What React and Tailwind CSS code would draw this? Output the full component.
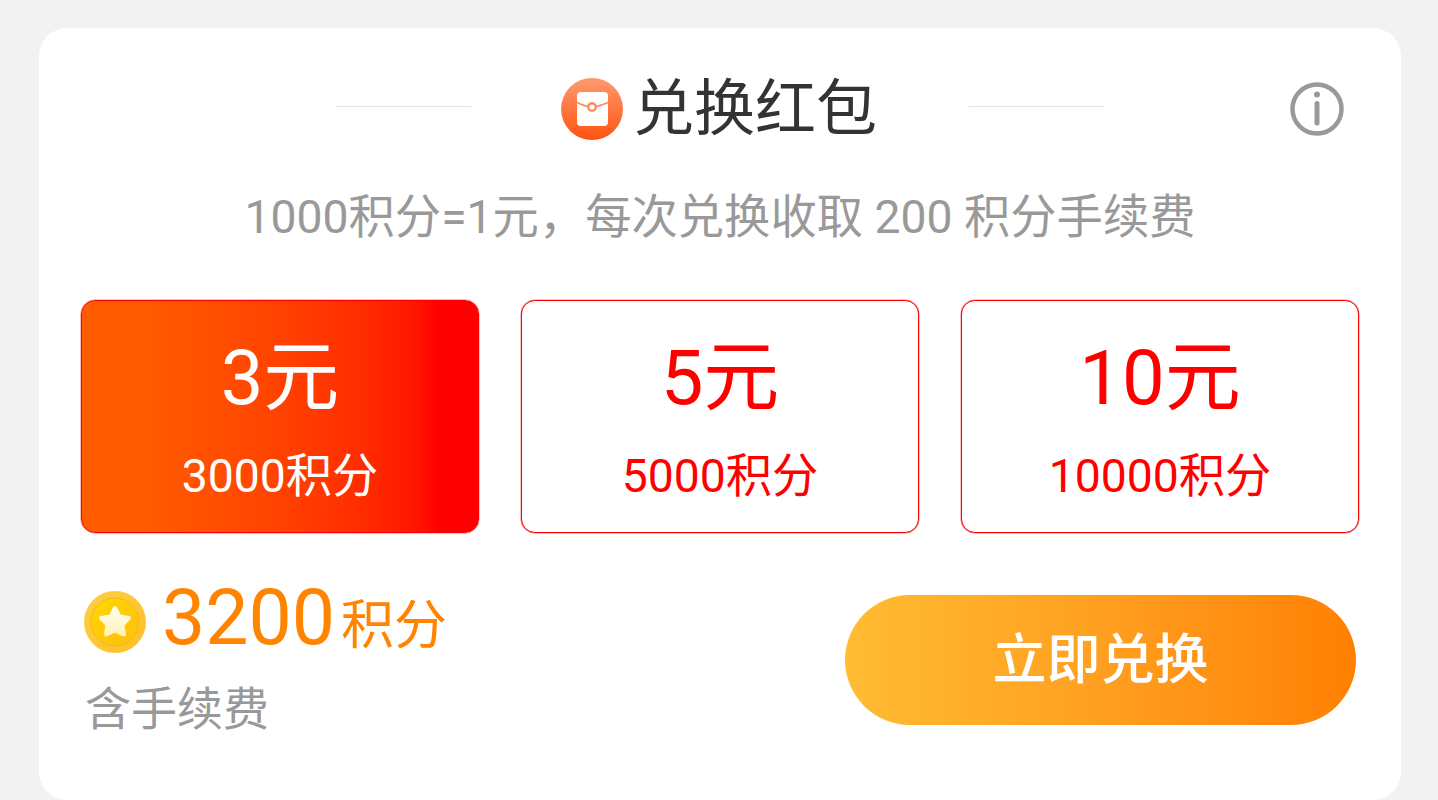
import React from 'react';

const font = { fontFamily: 'Roboto, "Noto Sans CJK SC", sans-serif' };

const options = [
  { yuan: '3元', points: '3000积分', active: true },
  { yuan: '5元', points: '5000积分' },
  { yuan: '10元', points: '10000积分' },
];

// red packet badge
function PacketIcon() {
  return (
    <svg width="62" height="62" viewBox="0 0 62 62" className="shrink-0">
      <defs>
        <linearGradient id="pk" x1="0" y1="0" x2="0" y2="1">
          <stop offset="0" stopColor="#ff9a70" />
          <stop offset="1" stopColor="#ff5310" />
        </linearGradient>
      </defs>
      <circle cx="31" cy="31" r="31" fill="url(#pk)" />
      <rect x="16" y="14" width="31" height="34" rx="4" fill="#fff" />
      <path d="M16 24.500 Q24 28.500 31 29 Q38 28.500 47 24.500" fill="none" stroke="#ff8a5c" strokeWidth="1.800" />
      <circle cx="31" cy="29" r="3.800" fill="#fff" stroke="#ff8a5c" strokeWidth="2.400" />
    </svg>
  );
}

function InfoIcon() {
  return (
    <svg width="54" height="54" viewBox="0 0 54 54">
      <circle cx="27" cy="27" r="24.500" fill="none" stroke="#999" strokeWidth="4.500" />
      <circle cx="27" cy="12.500" r="3" fill="#999" />
      <line x1="27" y1="21.500" x2="27" y2="41" stroke="#999" strokeWidth="5" strokeLinecap="round" />
    </svg>
  );
}

function CoinIcon() {
  return (
    <svg width="62" height="62" viewBox="0 0 62 62" className="shrink-0">
      <defs>
        <linearGradient id="rim" x1="0" y1="0" x2="1" y2="1">
          <stop offset="0" stopColor="#ffcf45" />
          <stop offset="1" stopColor="#ffbf25" />
        </linearGradient>
        <linearGradient id="cn" x1="0" y1="0" x2="1" y2="1">
          <stop offset="0" stopColor="#ffd800" />
          <stop offset="1" stopColor="#ffbd10" />
        </linearGradient>
        <linearGradient id="st" x1="0" y1="0" x2="0" y2="1">
          <stop offset="0" stopColor="#fffef2" />
          <stop offset="1" stopColor="#fff3b8" />
        </linearGradient>
      </defs>
      <circle cx="31" cy="31" r="31" fill="url(#rim)" />
      <circle cx="31" cy="31" r="24" fill="url(#cn)" stroke="#e9bd1c" strokeWidth="1" />
      <path
        d="M31 17 L35.500 25.500 L45 27 L38.500 34 L40 43.500 L31 39.500 L22 43.500 L23.500 34 L17 27 L26.500 25.500 Z"
        fill="url(#st)"
        stroke="url(#st)"
        strokeWidth="4"
        strokeLinejoin="round"
      />
    </svg>
  );
}

export default function App() {
  return (
    <div className="h-[800px] overflow-hidden bg-[#f2f2f2] pl-[39px] pr-[37px] pt-[28px]" style={font}>
      <div className="h-[772px] rounded-[28px] bg-white px-[42px]">
        <div className="relative flex h-[119px] justify-center pt-[43px]">
          <div className="flex h-[76px] items-center">
            <div className="mb-[6px] mr-[90px] h-px w-[135px] bg-[#e4e4e4]" />
            <PacketIcon />
            <span className="ml-[10px] text-[61px] leading-[76px] text-[#333]">兑换红包</span>
            <div className="mb-[6px] ml-[92px] h-px w-[135px] bg-[#e4e4e4]" />
          </div>
          <div className="absolute right-[15px] top-[54px]">
            <InfoIcon />
          </div>
        </div>

        <p className="mt-[42px] text-center text-[46.300px] leading-[56px] text-[#999]">
          1000积分=1元，每次兑换收取 200 积分手续费
        </p>

        <div className="mt-[55px] grid grid-cols-3 gap-[42px]">
          {options.map((o) => (
            <div
              key={o.yuan}
              className={
                o.active
                  ? 'flex h-[233px] flex-col items-center rounded-[14px] border border-[#ff0000] bg-gradient-to-r from-[#ff5c00] from-[15%] to-[#ff0000] to-[90%] text-white shadow-[0_0_0_0.5px_#ff8080]'
                  : 'flex h-[233px] flex-col items-center rounded-[14px] border border-[#ff0000] bg-white text-[#ff0000] shadow-[0_0_0_0.5px_#ff8080]'
              }
            >
              <span className="mt-[33px] text-[76px] leading-[88px]">{o.yuan}</span>
              <span className="mt-[24px] text-[46.300px] leading-[60px]">{o.points}</span>
            </div>
          ))}
        </div>

        <div className="flex justify-between">
          <div className="pl-[3px]">
            <div className="mt-[45px] flex h-[88px] items-center">
              <CoinIcon />
              <span className="mb-[8px] ml-[16px] text-[77px] leading-[76px] text-[#ff8400]">3200</span>
              <span className="ml-[6px] mt-[8px] text-[53px] leading-[60px] text-[#ff8400]">积分</span>
            </div>
            <p className="ml-[1px] mt-[13px] text-[46px] leading-[60px] text-[#999]">含手续费</p>
          </div>
          <button className="mr-[3px] mt-[62px] h-[130px] w-[511px] rounded-full bg-gradient-to-r from-[#ffbc33] to-[#ff8000] text-[54px] font-medium text-white">
            立即兑换
          </button>
        </div>
      </div>
    </div>
  );
}
